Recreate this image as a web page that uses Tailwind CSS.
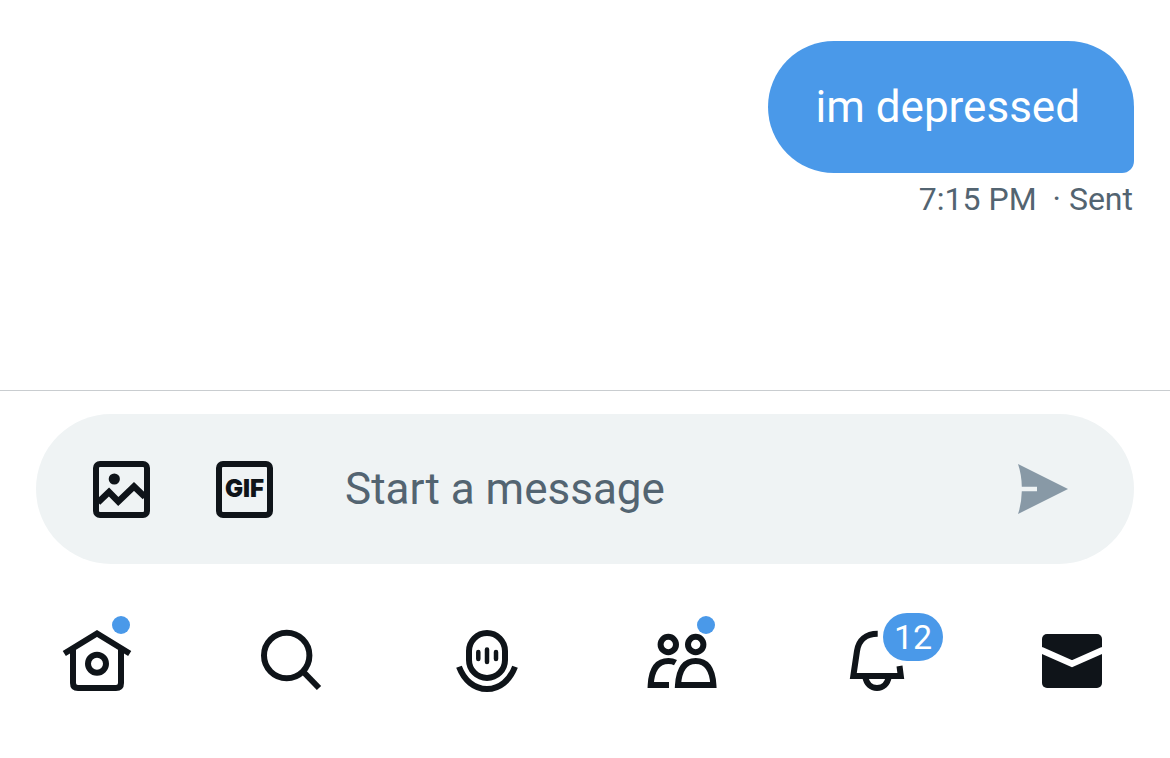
<!DOCTYPE html>
<html lang="en">
<head>
    <meta charset="UTF-8">
    <meta name="viewport" content="width=device-width, initial-scale=1.0">
    <title>Messages</title>
    <script src="https://cdn.jsdelivr.net/npm/@tailwindcss/browser@4"></script>
</head>
<body class="bg-white font-[Roboto,sans-serif]">
    <div class="min-h-screen flex flex-col">

        <!-- Conversation -->
        <main class="flex-1 px-9 pt-[41px]">
            <div class="flex flex-col items-end">
                <p class="bg-[#4a99e9] text-white text-[44px] leading-[60px] pl-12 pr-[54px] py-9 rounded-[66px] rounded-br-[12px]">im depressed</p>
                <p class="text-[#536471] text-[32px] leading-[40px] mt-[6px] pr-px flex gap-4">
                    <time>7:15 PM</time>
                    <span>· Sent</span>
                </p>
            </div>
        </main>

        <!-- Composer -->
        <form class="border-t border-[#c9cdd0] px-9 pt-[23px]">
            <div class="h-[150px] rounded-full bg-[#eff3f4] flex items-center pl-[57px] pr-[66px]">
                <button type="button" aria-label="Add a photo" class="shrink-0 text-[#0f1419]">
                    <svg class="size-[57px]" viewBox="0 0 57 57" fill="none" stroke="currentColor" stroke-width="6">
                        <rect x="3" y="3" width="51" height="51" rx="4"/>
                        <circle cx="21.3" cy="18" r="5.6" fill="currentColor" stroke="none"/>
                        <path d="M5 41.500L16 31L25.300 40.500L41 25.500L52 36" stroke-width="6.500"/>
                    </svg>
                </button>
                <button type="button" class="ml-[66px] size-[57px] shrink-0 flex items-center justify-center border-6 border-[#0f1419] rounded-[7px] text-[#0f1419] font-[Inter,sans-serif] font-black text-[24px] leading-none">GIF</button>
                <input type="text" aria-label="Message" placeholder="Start a message" class="ml-[72px] flex-1 min-w-0 bg-transparent outline-none text-[44px] leading-[60px] text-[#0f1419] placeholder:text-[#536471]">
                <button type="submit" aria-label="Send" class="shrink-0 text-[#8899a6]">
                    <svg class="size-[50px]" viewBox="0 0 50 50" fill="currentColor">
                        <path d="M0 0L50 25L0 50Q3.500 40 3.800 27.300H19V22.700H3.800Q3.500 10 0 0Z"/>
                    </svg>
                </button>
            </div>
        </form>

        <!-- Tab bar -->
        <nav class="grid grid-cols-6 justify-items-center pt-14 pb-[58px] text-[#0f1419]">
            <a href="#" aria-label="Home" class="relative">
                <svg class="w-[81px] h-[80px]" viewBox="0 0 81 80" fill="none" stroke="currentColor" stroke-width="6">
                    <path d="M7.300 33.500L40 13.500L72.700 33.500"/>
                    <path d="M16 29V63Q16 68 21 68H59Q64 68 64 63V29"/>
                    <circle cx="40" cy="43.700" r="9"/>
                </svg>
                <span class="absolute left-[55px] -top-1 size-[18px] rounded-full bg-[#4a99e9]"></span>
            </a>
            <a href="#" aria-label="Search">
                <svg class="w-[81px] h-[80px]" viewBox="0 0 81 80" fill="none" stroke="currentColor" stroke-width="6">
                    <circle cx="34.700" cy="35.500" r="22.700"/>
                    <path d="M50.500 51L67 68"/>
                </svg>
            </a>
            <a href="#" aria-label="Spaces">
                <svg class="w-[81px] h-[80px]" viewBox="0 0 81 80" fill="none" stroke="currentColor" stroke-width="6">
                    <rect x="22" y="13" width="36" height="45" rx="18"/>
                    <path d="M31.300 32V39M40 29.500V42M49 32V39" stroke-width="4.500" stroke-linecap="round"/>
                    <path d="M12 46.700C17 60 27 69 40 69S63 60 68 46.700"/>
                </svg>
            </a>
            <a href="#" aria-label="Communities" class="relative">
                <svg class="w-[81px] h-[80px]" viewBox="0 0 81 80" fill="none" stroke="currentColor" stroke-width="6">
                    <circle cx="26.300" cy="24.500" r="7.700"/>
                    <circle cx="53.700" cy="24.500" r="7.700"/>
                    <path d="M27 65H8.700C9.500 50 15 41 26.500 41Q30.500 41 33.500 42.700"/>
                    <path d="M36 65H71.400C70.500 50 65 41 53.700 41S37 50 36 65Z"/>
                </svg>
                <span class="absolute left-[55px] -top-1 size-[18px] rounded-full bg-[#4a99e9]"></span>
            </a>
            <a href="#" aria-label="Notifications" class="relative">
                <svg class="w-[81px] h-[80px]" viewBox="0 0 81 80" fill="none" stroke="currentColor" stroke-width="6">
                    <path d="M40.700 13.700C29 13.700 21.500 20 20 31L16.300 56H63.800L62.500 46"/>
                    <path d="M28.300 57C29.500 64 34 68 40 68S50.500 64 51.700 57"/>
                </svg>
                <span class="absolute left-[46px] -top-[7px] w-[60px] h-[48px] rounded-full bg-[#4a99e9] text-white text-[34px] leading-[48px] text-center">12</span>
            </a>
            <a href="#" aria-label="Messages">
                <svg class="w-[81px] h-[80px]" viewBox="0 0 81 80" fill="none">
                    <rect x="10" y="14" width="60" height="54" rx="5" fill="currentColor"/>
                    <path d="M9 30L40 43.700L71 30" stroke="#fff" stroke-width="6.500"/>
                </svg>
            </a>
        </nav>
    </div>
</body>
</html>
